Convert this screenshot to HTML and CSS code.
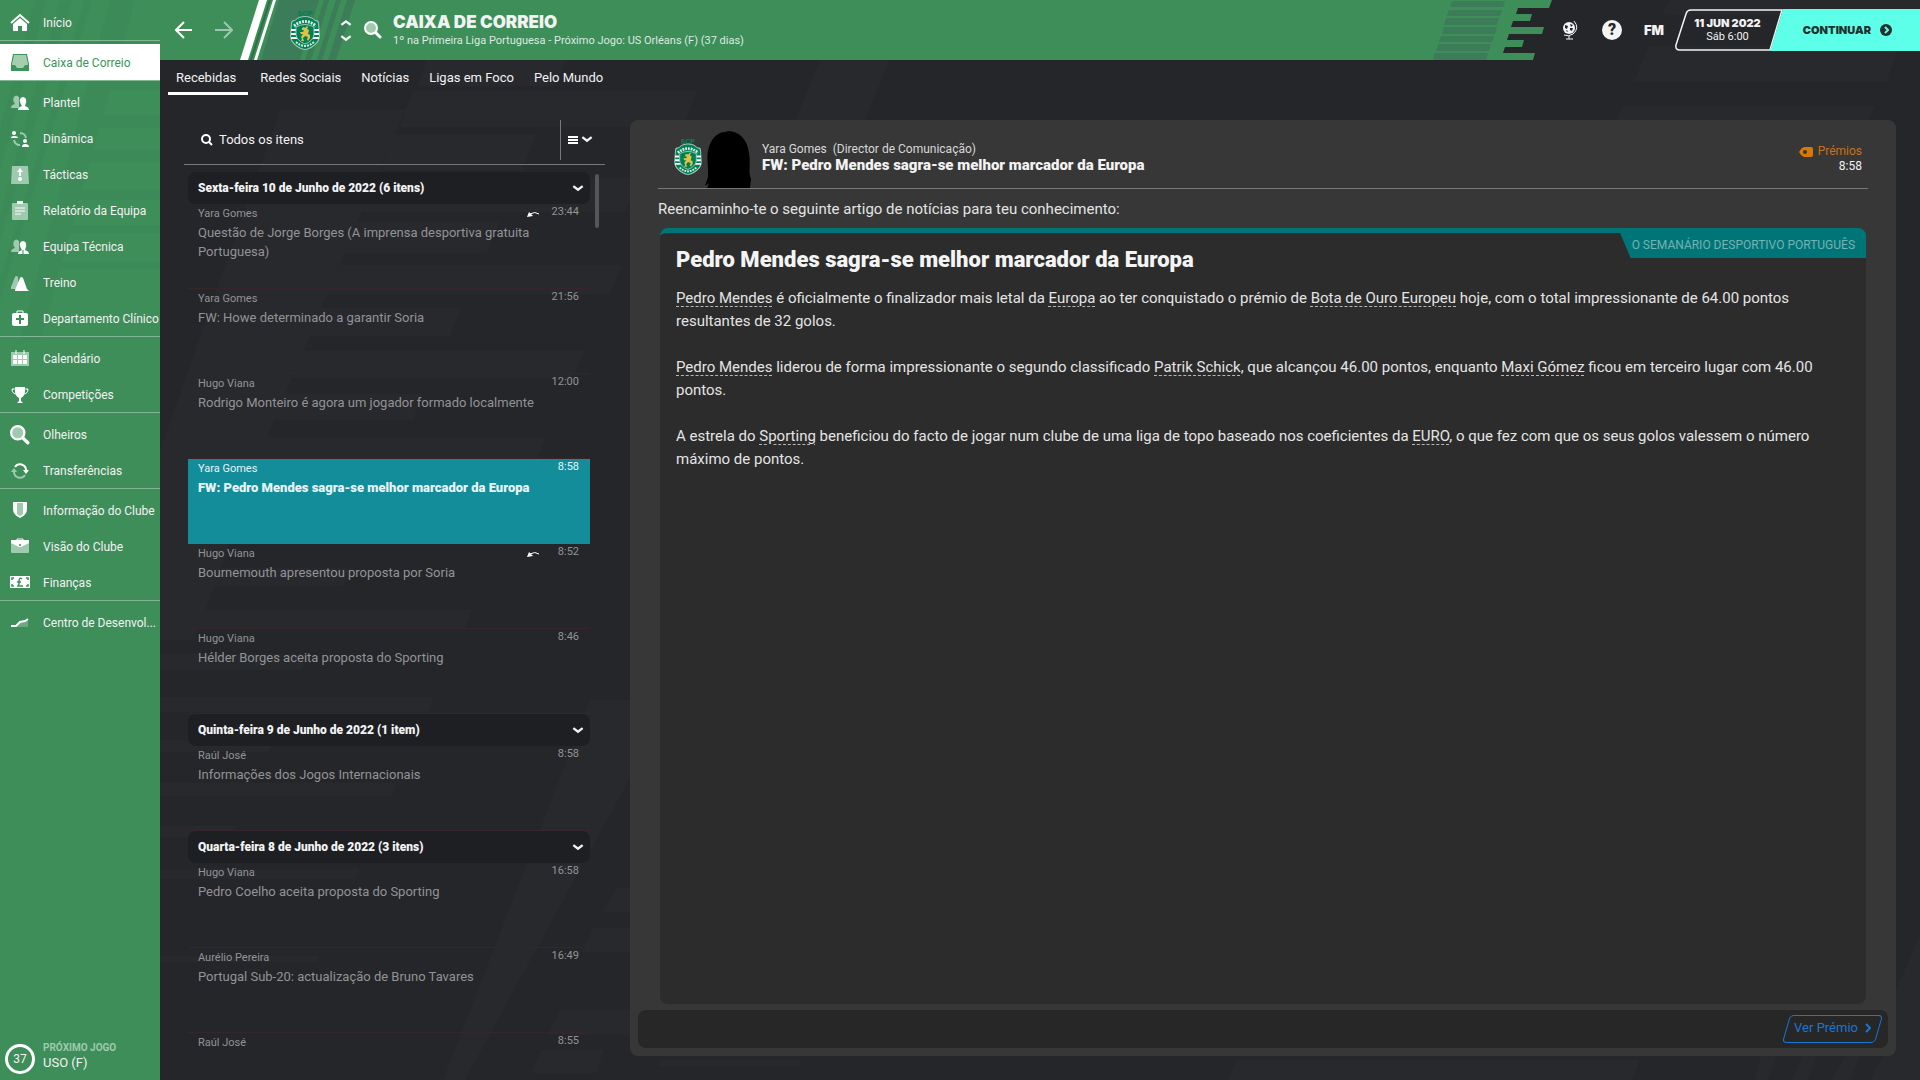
FILE: index.html
```html
<!DOCTYPE html>
<html lang="pt">
<head>
    <meta charset="UTF-8">
    <meta name="viewport" content="width=device-width, initial-scale=1.0">
    <title>Caixa de Correio</title>
    <link rel="stylesheet" href="styles.css">
</head>
<body>

<!-- Shared symbols -->
<svg class="symbols" aria-hidden="true">
    <symbol id="crest" viewBox="0 0 30 40">
        <path d="M15 6C19 6 22 7 25 10C28 10 29 11 29 13L30 26C30 33 22 39 15 40C8 39 0 33 0 26L1 13C1 11 2 10 5 10C8 7 11 6 15 6Z" fill="#9cc9b5"/>
        <path d="M15 7C19 7 22 8 25 11C27 11 28 12 28 14L29 26C29 32 21 38 15 39C9 38 1 32 1 26L2 14C2 12 3 11 5 11C8 8 11 7 15 7Z" fill="#008057"/>
        <path d="M1 20H29M1 24H29M1 28H29" stroke="#fff" stroke-width="2"/>
        <path d="M6 17Q15 12 24 17V25Q23 31 15 34Q7 31 6 25Z" fill="#008057" stroke="#9cc9b5"/>
        <path d="M12 18L14 17L15 18L17 16L18 17L17 19L19 20L18 24L20 25L20 28L18 31L17 29L18 27L15 26L13 28L14 31L11 31L12 29L11 27L13 24L11 24L10 22L13 22L14 20L12 20Z" fill="#e2c044"/>
        <path d="M4 16Q15 7 26 16" fill="none" stroke="#d5e9df" stroke-width="3" stroke-dasharray="2 1"/>
        <path d="M6 32Q15 40 24 32" fill="none" stroke="#d5e9df" stroke-width="2" stroke-dasharray="2 1"/>
    </symbol>
    <symbol id="chevron" viewBox="0 0 10 6">
        <path d="M1 1L5 4L9 1" fill="none" stroke="currentColor" stroke-width="2"/>
    </symbol>
    <symbol id="magnifier" viewBox="0 0 18 18">
        <circle cx="7" cy="7" r="6" fill="#9fcaae" stroke="#fff" stroke-width="2"/>
        <path d="M12 12L16 16" stroke="#fff" stroke-width="3" stroke-linecap="round"/>
    </symbol>
    <symbol id="reply" viewBox="0 0 13 6">
        <path d="M0 6L2 1L6 5Z" fill="#fff"/>
        <path d="M3 3Q8 0 12 3" fill="none" stroke="#fff"/>
    </symbol>
</svg>

<div class="app">
    <svg class="backdrop" viewBox="0 0 1920 1080" preserveAspectRatio="xMidYMid slice" aria-hidden="true">
        <path d="M427 60H566L556 86H417ZM413 91H697L683 127H399ZM394 135H536L522 170H380ZM376 178H640L625 212H362ZM356 222H500L487 253H343ZM338 265H622L610 294H326ZM321 308H461L450 336H308ZM301 351H585L573 378H290ZM285 394H423L413 420H272ZM262 437H546L537 460H253ZM205 568H354L343 586H199ZM188 610H472L465 628H181ZM160 654H308L302 670H160ZM160 697H434L428 712H160ZM160 740H274L268 752H160ZM160 783H397L392 796H160ZM160 826H236L231 837H160ZM160 869H360L354 879H160ZM160 956H320L317 962H160Z"/>
        <path d="M280 110H405L270 430L195 640H160V450ZM590 700H640V760L465 1080H443ZM617 888H630V912H602ZM593 928H630V952H582ZM560 1010H630V1035H548ZM541 1050H604L596 1073H531Z"/>
        <path d="M1669 0H1920V15H1662ZM1649 46H1899L1887 81H1634ZM1623 106H1875L1869 120H1617ZM1761 1056H1777L1768 1080H1754ZM1802 1056H1817L1808 1080H1792ZM1845 1056H1860L1850 1080H1832ZM1896 990L1920 935V1080H1870L1896 1030ZM1236 1060H1640L1632 1080H1228ZM820 60H890L865 120H795ZM660 1060H800V1066H658Z"/>
    </svg>

    <!-- Side menu -->
    <nav class="sidebar">
        <svg class="sidebar-art" viewBox="0 0 160 420" aria-hidden="true">
            <path d="M35 0H46L0 170V130ZM60 0H72L0 240V215ZM85 0H92L0 300V280ZM100 90L110 60H160V90ZM95 115H160V128H90ZM84 150H160V162H80ZM72 190H160V200H68ZM64 225H160V233H60ZM52 262H160V269H50ZM110 0H135L40 340H20Z"/>
        </svg>
        <ul class="menu-group">
            <li><a href="#"><svg viewBox="0 0 20 20"><path d="M1 10L10 2L19 10" fill="none" stroke="#fff" stroke-width="2"/><path d="M3 11L10 5L17 11V18H12V13H8V18H3Z" fill="#fff"/></svg>Início</a></li>
        </ul>
        <ul class="menu-group">
            <li><a href="#" class="active"><svg viewBox="0 0 20 20"><path d="M3 1H17L19 11V18H1V11Z" fill="#3d9458"/><path d="M4 2H16L18 11V12H15L13 15H7L5 12H2V11Z" fill="#a5cdb0"/></svg>Caixa de Correio</a></li>
        </ul>
        <ul class="menu-group">
            <li><a href="#"><svg viewBox="0 0 20 20"><path d="M1 15Q1 12 5 11Q2 7 4 4Q6 1 9 4V15Z" fill="#9fcaae"/><path d="M8 17Q8 14 12 13Q9 9 10 6Q13 2 16 6Q17 9 15 13Q19 14 19 17Z" fill="#fff"/></svg>Plantel</a></li>
            <li><a href="#"><svg viewBox="0 0 20 20"><path d="M10 4A6 6 0 0 1 16 9M4 11A6 6 0 0 0 10 16" fill="none" stroke="#9fcaae" stroke-width="2"/><circle cx="4" cy="4" r="2" fill="#fff"/><path d="M1 9Q1 7 4 7Q8 7 8 9ZM12 18Q12 15 15 15Q19 15 19 18Z" fill="#fff"/><circle cx="15" cy="12" r="2" fill="#fff"/></svg>Dinâmica</a></li>
            <li><a href="#"><svg viewBox="0 0 20 20"><path d="M2 1H18L19 19H1Z" fill="#9fcaae"/><path d="M10 3L13 7H11V11H9V7H7Z" fill="#fff"/><circle cx="10" cy="14" r="2" fill="#fff"/></svg>Tácticas</a></li>
            <li><a href="#"><svg viewBox="0 0 20 20"><rect x="2" y="2" width="16" height="17" rx="1" fill="#9fcaae"/><path d="M7 0H13V3H7Z" fill="#fff"/><path d="M5 7H15M5 10H15M5 13H11" stroke="#fff" stroke-width="1"/></svg>Relatório da Equipa</a></li>
            <li><a href="#"><svg viewBox="0 0 20 20"><path d="M1 15Q1 12 5 11Q2 7 4 4Q6 1 9 4V15Z" fill="#9fcaae"/><path d="M8 17Q8 14 12 13Q9 9 10 6Q13 2 16 6Q17 9 15 13Q19 14 19 17Z" fill="#fff"/><path d="M13 13V17" stroke="#3d8e59"/></svg>Equipa Técnica</a></li>
            <li><a href="#"><svg viewBox="0 0 20 20"><path d="M1 14L5 4Q6 2 8 4L9 16H1Z" fill="#9fcaae"/><path d="M5 17L10 5Q11 3 13 5L17 16L19 18H5Z" fill="#fff"/></svg>Treino</a></li>
            <li><a href="#"><svg viewBox="0 0 20 20"><path d="M7 5V2H13V5" fill="none" stroke="#fff" stroke-width="1"/><rect x="2" y="4" width="16" height="13" rx="2" fill="#fff"/><path d="M10 6V15M6 10H14" stroke="#3d8e59" stroke-width="2"/></svg>Departamento Clínico</a></li>
        </ul>
        <ul class="menu-group">
            <li><a href="#"><svg viewBox="0 0 20 20"><rect x="1" y="3" width="18" height="14" fill="#9fcaae"/><path d="M6 1V5M14 1V5" stroke="#fff"/><path d="M3 6h4v4H3zM8 6h4v4H8zM13 6h4v4h-4zM3 11h4v4H3zM8 11h4v4H8zM13 11h4v4h-4z" fill="#fff"/></svg>Calendário</a></li>
            <li><a href="#"><svg viewBox="0 0 20 20"><path d="M5 2H15V6Q15 11 11 13V16L13 18H7L9 16V13Q5 11 5 6Z" fill="#fff"/><path d="M5 4H2Q2 9 7 9M15 4H18Q18 9 13 9" fill="none" stroke="#fff"/></svg>Competições</a></li>
        </ul>
        <ul class="menu-group">
            <li><a href="#"><svg><use href="#magnifier"/></svg>Olheiros</a></li>
            <li><a href="#"><svg viewBox="0 0 20 20"><path d="M5 6A6 6 0 0 1 16 9" fill="none" stroke="#fff" stroke-width="2"/><path d="M13 9H19L16 13Z" fill="#fff"/><path d="M15 14A6 6 0 0 1 4 11" fill="none" stroke="#9fcaae" stroke-width="2"/><path d="M1 11H7L4 7Z" fill="#9fcaae"/></svg>Transferências</a></li>
        </ul>
        <ul class="menu-group">
            <li><a href="#"><svg viewBox="0 0 20 20"><path d="M3 1H17V8Q17 14 10 17Q3 14 3 8Z" fill="#fff"/><path d="M7 2H13V13Q11 15 10 15Q8 14 7 13Z" fill="#9fcaae"/></svg>Informação do Clube</a></li>
            <li><a href="#"><svg viewBox="0 0 20 20"><path d="M7 4V2H13V4" fill="none" stroke="#fff"/><rect x="1" y="3" width="18" height="13" rx="1" fill="#9fcaae"/><path d="M1 3H19V6L11 10H9L1 6Z" fill="#fff"/><circle cx="10" cy="8" r="1" fill="#3d8e59"/></svg>Visão do Clube</a></li>
            <li><a href="#"><svg viewBox="0 0 20 20"><rect y="3" width="20" height="12" fill="#fff"/><path d="M2 7V5H4M18 7V5H16M2 11V13H4M18 11V13H16M12 6Q9 4 9 8V11L8 13H13M7 9H11" fill="none" stroke="#3d8e59" stroke-width="1.5"/></svg>Finanças</a></li>
        </ul>
        <ul class="menu-group">
            <li><a href="#"><svg viewBox="0 0 20 20"><path d="M1 14L7 12L11 9L18 7V14H1Z" fill="#6aa97e"/><path d="M1 13H6L10 9L15 8L18 6" fill="none" stroke="#fff" stroke-width="2"/></svg>Centro de Desenvol...</a></li>
        </ul>
        <div class="next-match">
            <span class="days">37</span>
            <div class="next-text">
                <p class="next-label">PRÓXIMO JOGO</p>
                <p class="next-team">USO (F)</p>
            </div>
        </div>
    </nav>

    <div class="page">
        <!-- Title bar -->
        <header class="topbar">
            <div class="club-bar">
                <svg class="slashes" viewBox="0 0 115 60" aria-hidden="true">
                    <path d="M39 0H115L96 60H21Z" fill="#3c7c59"/>
                    <path d="M79 0H84L65 60H60ZM89 0H96L77 60H71ZM101 0H107L88 60H82Z" fill="#3d8e59"/>
                    <path d="M19 0H27L8 60H0ZM33 0H36L17 60H14Z" fill="#fff"/>
                    <path d="M29 0H31L12 60H10Z" fill="#2f6f48"/>
                </svg>
                <button class="nav-btn" aria-label="Voltar"><svg viewBox="0 0 18 18"><path d="M17 9H2M9 1L1 9L9 17" fill="none" stroke="#fff" stroke-width="2"/></svg></button>
                <button class="nav-btn forward" aria-label="Avançar"><svg viewBox="0 0 18 18"><path d="M0 9H16M9 1L17 9L9 17" fill="none" stroke="#fff" stroke-width="2"/></svg></button>
                <svg class="crest" viewBox="0 0 30 40"><text x="15" y="6">SCP</text><use href="#crest"/></svg>
                <div class="steppers">
                    <button aria-label="Anterior"><svg class="up"><use href="#chevron"/></svg></button>
                    <button aria-label="Seguinte"><svg><use href="#chevron"/></svg></button>
                </div>
                <button class="find" aria-label="Procurar"><svg><use href="#magnifier"/></svg></button>
                <div>
                    <h1>CAIXA DE CORREIO</h1>
                    <p class="subtitle">1º na Primeira Liga Portuguesa - Próximo Jogo: US Orléans (F) (37 dias)</p>
                </div>
            </div>
            <svg class="bar-end" viewBox="0 0 120 60" aria-hidden="true">
                <path d="M0 0H119L116 8H85L83 14H99L97 21H80L78 27H111L109 34H76L74 40H91L89 47H72L70 53H102L100 60H0Z" fill="#3d8e59"/>
                <path d="M19 1H72L70 7H17ZM16 10H69L67 16H14ZM13 18H66L64 25H11ZM11 27H64L62 34H9ZM8 36H61L59 42H6ZM5 44H58L56 51H3ZM2 53H55L53 60H0Z" fill="#3c7c59"/>
            </svg>
            <div class="tools">
                <button aria-label="Mundo"><svg viewBox="0 0 20 20"><circle cx="9" cy="8" r="6" fill="#f4f4f4"/><path d="M5 5l3 1-1 3-2-1zM10 4l3 1-2 2zM10 8l3 0-1 3-2-1zM6 10l2 1-1 1z" fill="#25262a"/><path d="M14 1Q20 8 13 14Q9 17 4 15M9 16V19M6 19H13" fill="none" stroke="#f4f4f4"/></svg></button>
                <button class="help" aria-label="Ajuda">?</button>
                <button class="fm">FM</button>
            </div>
            <div class="date">
                <svg viewBox="0 0 108 42" preserveAspectRatio="none" aria-hidden="true"><path d="M107 1H16Q12 1 11 5L1 36Q0 41 5 41H95Z" fill="none" stroke="#f4f4f4" stroke-width="1.5"/></svg>
                <strong>11 JUN 2022</strong>
                <span>Sáb 6:00</span>
            </div>
            <button class="continue">CONTINUAR
                <svg viewBox="0 0 12 12"><circle cx="6" cy="6" r="6" fill="#22302f"/><path d="M5 3L8 6L5 9" fill="none" stroke="#5effe8" stroke-width="2"/></svg>
            </button>
        </header>

        <nav class="tabs">
            <a href="#" class="current">Recebidas</a>
            <a href="#">Redes Sociais</a>
            <a href="#">Notícias</a>
            <a href="#">Ligas em Foco</a>
            <a href="#">Pelo Mundo</a>
        </nav>

        <main class="content">
            <!-- Message list -->
            <section class="inbox">
                <div class="filter">
                    <label for="filter-text"><svg viewBox="0 0 12 12" aria-label="Filtrar"><circle cx="5" cy="5" r="4" fill="none" stroke="#fff" stroke-width="2"/><path d="M8 8L11 11" stroke="#fff" stroke-width="2"/></svg></label>
                    <input type="text" id="filter-text" placeholder="Todos os itens">
                    <button class="view-btn" aria-label="Vista">
                        <svg viewBox="0 0 10 10"><path d="M0 2H10M0 5H10M0 8H10" stroke="#fff" stroke-width="2"/></svg>
                        <svg><use href="#chevron"/></svg>
                    </button>
                </div>
                <div class="messages">
                    <div class="scroll-thumb"></div>
                    <h2>Sexta-feira 10 de Junho de 2022 (6 itens)<svg><use href="#chevron"/></svg></h2>
                    <article class="message">
                        <div class="from">Yara Gomes<svg><use href="#reply"/></svg><time>23:44</time></div>
                        <p>Questão de Jorge Borges (A imprensa desportiva gratuita Portuguesa)</p>
                    </article>
                    <article class="message">
                        <div class="from">Yara Gomes<time>21:56</time></div>
                        <p>FW: Howe determinado a garantir Soria</p>
                    </article>
                    <article class="message">
                        <div class="from">Hugo Viana<time>12:00</time></div>
                        <p>Rodrigo Monteiro é agora um jogador formado localmente</p>
                    </article>
                    <article class="message selected">
                        <div class="from">Yara Gomes<time>8:58</time></div>
                        <p>FW: Pedro Mendes sagra-se melhor marcador da Europa</p>
                    </article>
                    <article class="message">
                        <div class="from">Hugo Viana<svg><use href="#reply"/></svg><time>8:52</time></div>
                        <p>Bournemouth apresentou proposta por Soria</p>
                    </article>
                    <article class="message">
                        <div class="from">Hugo Viana<time>8:46</time></div>
                        <p>Hélder Borges aceita proposta do Sporting</p>
                    </article>
                    <h2>Quinta-feira 9 de Junho de 2022 (1 item)<svg><use href="#chevron"/></svg></h2>
                    <article class="message">
                        <div class="from">Raúl José<time>8:58</time></div>
                        <p>Informações dos Jogos Internacionais</p>
                    </article>
                    <h2>Quarta-feira 8 de Junho de 2022 (3 itens)<svg><use href="#chevron"/></svg></h2>
                    <article class="message">
                        <div class="from">Hugo Viana<time>16:58</time></div>
                        <p>Pedro Coelho aceita proposta do Sporting</p>
                    </article>
                    <article class="message">
                        <div class="from">Aurélio Pereira<time>16:49</time></div>
                        <p>Portugal Sub-20: actualização de Bruno Tavares</p>
                    </article>
                    <article class="message">
                        <div class="from">Raúl José<time>8:55</time></div>
                    </article>
                </div>
            </section>

            <!-- Open message -->
            <section class="reader">
                <div class="reader-head">
                    <svg class="crest" viewBox="0 0 30 40"><text x="15" y="6">SCP</text><use href="#crest"/></svg>
                    <svg class="portrait" viewBox="0 0 47 57" aria-hidden="true"><path d="M24 0C35 1 42 8 44 22C46 34 43 40 46 48L45 57H2L4 52L0 55L3 46C4 36 0 24 5 13C9 4 15 1 20 1Z" fill="#000"/></svg>
                    <div class="reader-title">
                        <p>Yara Gomes&nbsp; (Director de Comunicação)</p>
                        <h2>FW: Pedro Mendes sagra-se melhor marcador da Europa</h2>
                    </div>
                    <div class="reader-meta">
                        <a href="#"><svg viewBox="0 0 14 10"><path d="M5 0H12Q14 0 14 2V8Q14 10 12 10H5Q2 9 0 5Q2 1 5 0Z" fill="#d67a05"/><circle cx="6" cy="5" r="2" fill="#373737"/></svg>Prémios</a>
                        <time>8:58</time>
                    </div>
                </div>
                <p class="intro">Reencaminho-te o seguinte artigo de notícias para teu conhecimento:</p>
                <article class="story">
                    <span class="source">O SEMANÁRIO DESPORTIVO PORTUGUÊS</span>
                    <h3>Pedro Mendes sagra-se melhor marcador da Europa</h3>
                    <p><a href="#">Pedro Mendes</a> é oficialmente o finalizador mais letal da <a href="#">Europa</a> ao ter conquistado o prémio de <a href="#">Bota de Ouro Europeu</a> hoje, com o total impressionante de 64.00 pontos resultantes de 32 golos.</p>
                    <p><a href="#">Pedro Mendes</a> liderou de forma impressionante o segundo classificado <a href="#">Patrik Schick</a>, que alcançou 46.00 pontos, enquanto <a href="#">Maxi Gómez</a> ficou em terceiro lugar com 46.00 pontos.</p>
                    <p>A estrela do <a href="#">Sporting</a> beneficiou do facto de jogar num clube de uma liga de topo baseado nos coeficientes da <a href="#">EURO</a>, o que fez com que os seus golos valessem o número máximo de pontos.</p>
                </article>
                <footer class="reader-foot">
                    <button class="award-btn">Ver Prémio <svg viewBox="0 0 6 10"><path d="M1 1L5 5L1 9" fill="none" stroke="#1a76d2" stroke-width="2"/></svg></button>
                </footer>
            </section>
        </main>
    </div>
</div>

</body>
</html>
```
FILE: styles.css
```css
/* Base */
* {
    box-sizing: border-box;
}
body {
    margin: 0;
    background-color: #25262a;
    color: #f2f2f2;
    font-family: Roboto, "Liberation Sans", sans-serif;
    font-size: 13px;
    overflow: hidden;
}
h1, h2, h3, p, ul {
    margin: 0;
    padding: 0;
}
a {
    color: inherit;
    text-decoration: none;
}
button {
    padding: 0;
    border: none;
    background: none;
    color: inherit;
    font-family: inherit;
    cursor: pointer;
}
svg {
    display: block;
    flex: none;
}
.symbols {
    position: absolute;
    width: 0;
    height: 0;
}
.crest text {
    font-size: 8px;
    font-weight: 900;
    fill: #008057;
    text-anchor: middle;
}
.app {
    position: relative;
    display: flex;
    height: 100vh;
}
.backdrop {
    position: absolute;
    width: 100%;
    height: 100%;
    fill: #28292d;
}

/* Side menu */
.sidebar {
    position: relative;
    display: flex;
    flex-direction: column;
    flex: none;
    width: 160px;
    padding-top: 4px;
    background-color: #3d8e59;
    overflow: hidden;
}
.sidebar-art {
    position: absolute;
    top: 0;
    left: 0;
    width: 160px;
    fill: #3b8a57;
}
.menu-group {
    position: relative;
    list-style: none;
    border-bottom: 1px solid #82b793;
    margin-bottom: 3px;
}
.menu-group:last-of-type {
    border-bottom: none;
}
.menu-group a {
    display: flex;
    align-items: center;
    gap: 13px;
    height: 36px;
    padding: 2px 0 0 10px;
    font-size: 12px;
    white-space: nowrap;
}
.menu-group svg {
    width: 20px;
    height: 20px;
}
.menu-group .active {
    background-color: #fff;
    color: #3d9458;
}
.next-match {
    display: flex;
    align-items: center;
    gap: 8px;
    margin-top: auto;
    padding: 0 0 3px 5px;
}
.days {
    width: 30px;
    height: 30px;
    border: 3px solid #fff;
    border-radius: 50%;
    line-height: 24px;
    font-size: 12px;
    text-align: center;
}
.next-text {
    padding-bottom: 6px;
}
.next-label {
    font-size: 10px;
    line-height: 14px;
    font-weight: bold;
    color: #9fcaae;
}
.next-team {
    font-size: 13px;
    line-height: 16px;
}

/* Title bar */
.page {
    position: relative;
    display: flex;
    flex-direction: column;
    flex: 1;
    min-width: 0;
}
.topbar {
    display: flex;
    align-items: center;
    height: 60px;
    flex: none;
}
.club-bar {
    position: relative;
    display: flex;
    align-items: center;
    flex: 1;
    height: 60px;
    padding-left: 15px;
    background-color: #3d8e59;
}
.club-bar > * {
    position: relative;
}
.club-bar .slashes {
    position: absolute;
    left: 80px;
    width: 115px;
    height: 60px;
}
.nav-btn svg {
    width: 18px;
    height: 18px;
}
.forward {
    margin-left: 22px;
    opacity: 0.5;
}
.club-bar .crest {
    width: 30px;
    height: 40px;
    margin-left: 57px;
}
.steppers {
    display: grid;
    gap: 9px;
    margin-left: 20px;
}
.steppers svg {
    width: 12px;
    height: 7px;
}
.steppers .up {
    transform: rotate(180deg);
}
.find {
    margin: 0 11px 0 12px;
}
.find svg {
    width: 18px;
    height: 18px;
}
h1 {
    font-family: Inter, Roboto, sans-serif;
    font-size: 17px;
    line-height: 22px;
    font-weight: 900;
}
.subtitle {
    font-size: 11px;
    line-height: 16px;
    color: #dcebe1;
}
.bar-end {
    width: 120px;
    height: 60px;
}
.tools {
    display: flex;
    align-items: center;
    gap: 22px;
    padding: 0 11px 0 7px;
}
.tools svg {
    width: 20px;
    height: 20px;
}
.help {
    width: 20px;
    height: 20px;
    border-radius: 50%;
    background-color: #f4f4f4;
    color: #25262a;
    font-size: 16px;
    font-weight: 900;
    line-height: 20px;
}
.fm {
    font-family: Inter, Roboto, sans-serif;
    font-size: 13px;
    font-weight: 900;
}
.date {
    position: relative;
    display: flex;
    flex-direction: column;
    justify-content: center;
    align-items: center;
    width: 108px;
    height: 42px;
    margin-right: -13px;
    padding-right: 3px;
    font-size: 11px;
    line-height: 14px;
}
.date svg {
    position: absolute;
    left: 0;
    width: 100%;
    height: 100%;
}
.date strong {
    font-family: Inter, Roboto, sans-serif;
    font-weight: 900;
}
.continue {
    display: flex;
    align-items: center;
    justify-content: center;
    gap: 9px;
    width: 150px;
    height: 42px;
    padding-left: 5px;
    background-color: #5effe8;
    clip-path: polygon(13px 0, 100% 0, 100% 100%, 0 100%);
    color: #22302f;
    font-family: Inter, Roboto, sans-serif;
    font-size: 11px;
    font-weight: 900;
}
.continue svg {
    width: 12px;
    height: 12px;
}

/* Tabs */
.tabs {
    display: flex;
    gap: 4px;
    padding-left: 8px;
}
.tabs a {
    height: 35px;
    padding: 0 8px;
    border-bottom: 3px solid transparent;
    line-height: 35px;
}
.tabs .current {
    padding-right: 12px;
    border-color: #fff;
}

/* Message list */
.content {
    display: flex;
    flex: 1;
    gap: 25px;
    min-height: 0;
    padding: 25px 24px 0 24px;
}
.inbox {
    display: flex;
    flex-direction: column;
    flex: none;
    width: 421px;
}
.filter {
    display: flex;
    align-items: center;
    flex: none;
    gap: 6px;
    height: 45px;
    padding: 0 12px 5px 17px;
    border-bottom: 1px solid #77787b;
}
.filter label svg {
    width: 12px;
    height: 12px;
}
.filter input {
    flex: 1;
    min-width: 0;
    padding: 0;
    border: none;
    background: none;
    color: #f2f2f2;
    font-family: inherit;
    font-size: 13px;
}
.filter input::placeholder {
    color: #f2f2f2;
}
.view-btn {
    display: flex;
    align-items: center;
    gap: 3px;
    height: 40px;
    padding-left: 7px;
    border-left: 1px solid #77787b;
}
.view-btn svg {
    width: 10px;
    height: 10px;
}
.view-btn svg + svg {
    width: 12px;
    height: 7px;
}
.messages {
    position: relative;
    flex: 1;
    min-height: 0;
    padding: 7px 15px 0 4px;
    overflow: hidden;
}
.scroll-thumb {
    position: absolute;
    top: 9px;
    right: 6px;
    width: 4px;
    height: 54px;
    border-radius: 2px;
    background-color: #55565a;
}
.messages h2 {
    display: flex;
    align-items: center;
    justify-content: space-between;
    height: 32px;
    padding: 0 6px 0 10px;
    border-radius: 8px;
    background-color: #1e1f23;
    font-size: 12px;
    font-weight: 900;
}
.messages h2 svg {
    width: 12px;
    height: 7px;
}
.message {
    height: 85px;
    padding: 0 11px 0 10px;
    border-bottom: 1px solid #372529;
    color: #929395;
}
.from {
    display: flex;
    align-items: center;
    height: 19px;
    font-size: 11px;
}
.from svg {
    width: 13px;
    height: 6px;
    margin-left: auto;
}
.from time {
    min-width: 39px;
    margin-left: auto;
    padding-bottom: 4px;
    text-align: right;
}
.from svg + time {
    margin-left: 0;
}
.message p {
    font-size: 13px;
    line-height: 19px;
}
.selected {
    border-color: #148d9a;
    background-color: #148d9a;
    color: #e6f3f4;
}
.selected p {
    font-weight: 900;
}

/* Open message */
.reader {
    display: flex;
    flex-direction: column;
    flex: 1;
    min-width: 0;
    margin-bottom: 24px;
    padding: 0 8px 8px;
    border-radius: 8px;
    background-color: #373737;
}
.reader-head {
    display: flex;
    align-items: center;
    flex: none;
    height: 69px;
    margin: 0 20px;
    padding-left: 16px;
    border-bottom: 1px solid #77787b;
}
.reader-head .crest {
    width: 28px;
    height: 37px;
    margin-top: 4px;
}
.portrait {
    align-self: flex-end;
    width: 47px;
    height: 57px;
    margin: 0 10px 0 3px;
}
.reader-title {
    flex: 1;
    padding-top: 8px;
}
.reader-title p {
    font-size: 12px;
    line-height: 14px;
    color: #d8d8d8;
}
.reader-title h2 {
    font-size: 15px;
    line-height: 18px;
    font-weight: 900;
}
.reader-meta {
    padding: 10px 6px 0 0;
    font-size: 12px;
    line-height: 15px;
    text-align: right;
}
.reader-meta a {
    display: flex;
    align-items: center;
    gap: 5px;
    color: #c4731c;
}
.reader-meta svg {
    width: 14px;
    height: 10px;
}
.intro {
    margin-left: 20px;
    padding-top: 1px;
    font-size: 15px;
    line-height: 38px;
    color: #e4e4e4;
}
.story {
    flex: 1;
    margin: 0 22px 6px;
    padding: 15px 16px;
    border-top: 5px solid #007578;
    border-radius: 8px;
    background-color: #2c2c2c;
    color: #e4e4e4;
}
.source {
    float: right;
    margin: -16px -16px 0 0;
    padding: 0 11px 0 12px;
    border-radius: 0 4px 0 0;
    background-color: #007578;
    clip-path: polygon(0 0, 100% 0, 100% 100%, 11px 100%);
    color: #73b3b3;
    font-size: 12px;
    line-height: 26px;
}
.story h3 {
    font-size: 22px;
    line-height: 24px;
    margin-bottom: 15px;
    font-weight: 900;
    color: #f4f4f4;
}
.story p {
    margin-bottom: 23px;
    font-size: 15px;
    line-height: 23px;
}
.story p a {
    text-decoration: underline dashed 1px #b5b5b5;
    text-underline-offset: 3px;
}
.reader-foot {
    display: flex;
    align-items: center;
    justify-content: flex-end;
    flex: none;
    height: 38px;
    padding-right: 9px;
    border-radius: 8px;
    background-color: #272727;
}
.award-btn {
    position: relative;
    display: flex;
    align-items: center;
    gap: 7px;
    height: 28px;
    padding: 0 8px 3px;
    color: #1a76d2;
    font-size: 13px;
}
.award-btn::before {
    content: "";
    position: absolute;
    inset: 0;
    border: 1px solid #1a76d2;
    border-radius: 4px;
    transform: skewX(-16deg);
}
.award-btn svg {
    width: 6px;
    height: 10px;
}
```
